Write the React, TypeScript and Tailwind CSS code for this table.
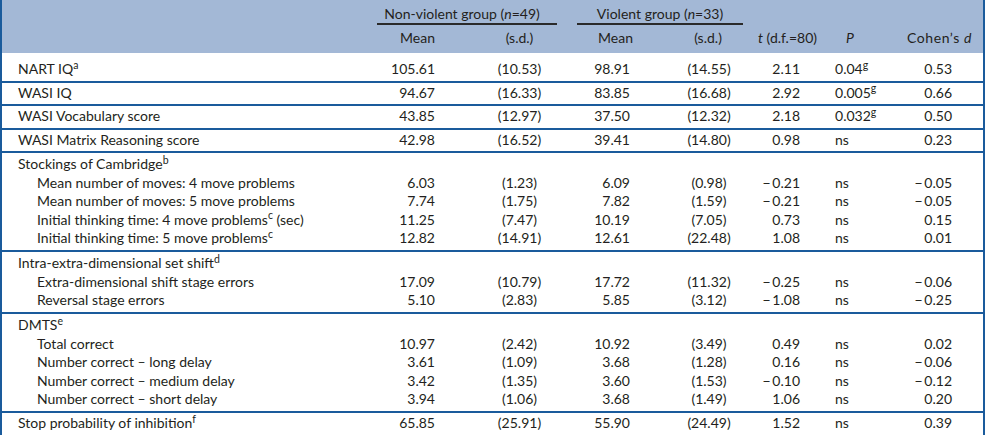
import type { ReactNode } from 'react'

type Row = {
  label: ReactNode
  vals?: ReactNode[]
  indent?: boolean
  pos: 'top' | 'single' | 'first' | 'mid' | 'last'
}

const M = '\u2212\u2009'

const rows: Row[] = [
  { label: <>NART IQ<sup>a</sup></>, vals: ['105.61', '(10.53)', '98.91', '(14.55)', '2.11', <>0.04<sup>g</sup></>, '0.53'], pos: 'top' },
  { label: 'WASI IQ', vals: ['94.67', '(16.33)', '83.85', '(16.68)', '2.92', <>0.005<sup>g</sup></>, '0.66'], pos: 'single' },
  { label: 'WASI Vocabulary score', vals: ['43.85', '(12.97)', '37.50', '(12.32)', '2.18', <>0.032<sup>g</sup></>, '0.50'], pos: 'single' },
  { label: 'WASI Matrix Reasoning score', vals: ['42.98', '(16.52)', '39.41', '(14.80)', '0.98', 'ns', '0.23'], pos: 'single' },
  { label: <>Stockings of Cambridge<sup>b</sup></>, pos: 'first' },
  { label: 'Mean number of moves: 4 move problems', vals: ['6.03', '(1.23)', '6.09', '(0.98)', M + '0.21', 'ns', M + '0.05'], indent: true, pos: 'mid' },
  { label: 'Mean number of moves: 5 move problems', vals: ['7.74', '(1.75)', '7.82', '(1.59)', M + '0.21', 'ns', M + '0.05'], indent: true, pos: 'mid' },
  { label: <>Initial thinking time: 4 move problems<sup>c</sup> (sec)</>, vals: ['11.25', '(7.47)', '10.19', '(7.05)', '0.73', 'ns', '0.15'], indent: true, pos: 'mid' },
  { label: <>Initial thinking time: 5 move problems<sup>c</sup></>, vals: ['12.82', '(14.91)', '12.61', '(22.48)', '1.08', 'ns', '0.01'], indent: true, pos: 'last' },
  { label: <>Intra-extra-dimensional set shift<sup>d</sup></>, pos: 'first' },
  { label: 'Extra-dimensional shift stage errors', vals: ['17.09', '(10.79)', '17.72', '(11.32)', M + '0.25', 'ns', M + '0.06'], indent: true, pos: 'mid' },
  { label: 'Reversal stage errors', vals: ['5.10', '(2.83)', '5.85', '(3.12)', M + '1.08', 'ns', M + '0.25'], indent: true, pos: 'last' },
  { label: <>DMTS<sup>e</sup></>, pos: 'first' },
  { label: 'Total correct', vals: ['10.97', '(2.42)', '10.92', '(3.49)', '0.49', 'ns', '0.02'], indent: true, pos: 'mid' },
  { label: 'Number correct – long delay', vals: ['3.61', '(1.09)', '3.68', '(1.28)', '0.16', 'ns', M + '0.06'], indent: true, pos: 'mid' },
  { label: 'Number correct – medium delay', vals: ['3.42', '(1.35)', '3.60', '(1.53)', M + '0.10', 'ns', M + '0.12'], indent: true, pos: 'mid' },
  { label: 'Number correct – short delay', vals: ['3.94', '(1.06)', '3.68', '(1.49)', '1.06', 'ns', '0.20'], indent: true, pos: 'last' },
  { label: <>Stop probability of inhibition<sup>f</sup></>, vals: ['65.85', '(25.91)', '55.90', '(24.49)', '1.52', 'ns', '0.39'], pos: 'single' },
]

// value columns: alignment per column
const valCls = [
  'text-right pr-[47px]',
  'text-center',
  'text-right pr-[30px]',
  'text-center pl-[13px]',
  'text-right pr-[30px]',
  'text-left pl-[5px]',
  'text-right pr-[31px]',
]

const padFor: Record<Row['pos'], string> = {
  top: 'pt-[7px] pb-[2px]',
  single: 'border-t-2 border-[#1a5b9c] pt-[1px] pb-[2px]',
  first: 'border-t-2 border-[#1a5b9c] pt-[2px]',
  mid: '',
  last: 'pb-[2.5px]',
}

export default function App() {
  return (
    <div className="w-[985px] bg-white text-[#231f20] font-['Lato','Liberation_Sans',sans-serif] text-[14px]">
      <div className="border-l-2 border-r-2 border-[#1a5b9c]">
        <table className="w-[981px] table-fixed">
          <colgroup>
            <col className="w-[375px]" />
            <col className="w-[105px]" />
            <col className="w-[75px]" />
            <col className="w-[103px]" />
            <col className="w-[85px]" />
            <col className="w-[85px]" />
            <col className="w-[40px]" />
            <col className="w-[113px]" />
          </colgroup>
          <thead className="bg-[#a3b8d6]">
            <tr>
              <th className="font-normal" />
              <th colSpan={2} className="font-normal pt-[5px] align-top">
                <div className="leading-[18px] border-b-2 border-[#2a2a2a] text-center pr-[10px]">
                  Non-violent group (<i>n</i>=49)
                </div>
              </th>
              <th colSpan={2} className="font-normal pt-[5px] align-top">
                <div className="leading-[18px] border-b-2 border-[#2a2a2a] text-center ml-[20px] mr-[2px]">
                  Violent group (<i>n</i>=33)
                </div>
              </th>
              <th colSpan={3} className="font-normal" />
            </tr>
            <tr className="leading-[18px]">
              <th className="font-normal pt-[4px] pb-[6px]" />
              <th className="font-normal pt-[4px] pb-[6px] text-right pr-[47px]">Mean</th>
              <th className="font-normal pt-[4px] pb-[6px] text-center">(s.d.)</th>
              <th className="font-normal pt-[4px] pb-[6px] text-right pr-[27px]">Mean</th>
              <th className="font-normal pt-[4px] pb-[6px] text-center pl-[11px]">(s.d.)</th>
              <th className="font-normal pt-[4px] pb-[6px] text-center">
                <i>t</i> (d.f.=80)
              </th>
              <th className="font-normal pt-[4px] pb-[6px] text-center">
                <i>P</i>
              </th>
              <th className="font-normal pt-[4px] pb-[6px] text-right pr-[11px] tracking-[0.6px]">
                Cohen’s <i>d</i>
              </th>
            </tr>
          </thead>
          <tbody className="leading-[18.5px]">
            {rows.map((r, i) => (
              <tr key={i}>
                <td className={`${padFor[r.pos]} text-left whitespace-nowrap ${r.indent ? 'pl-[35px]' : 'pl-[16px]'}`}>
                  {r.label}
                </td>
                {valCls.map((c, j) => (
                  <td key={j} className={`${padFor[r.pos]} ${c} whitespace-nowrap`}>
                    {r.vals ? r.vals[j] : null}
                  </td>
                ))}
              </tr>
            ))}
          </tbody>
        </table>
      </div>
    </div>
  )
}
